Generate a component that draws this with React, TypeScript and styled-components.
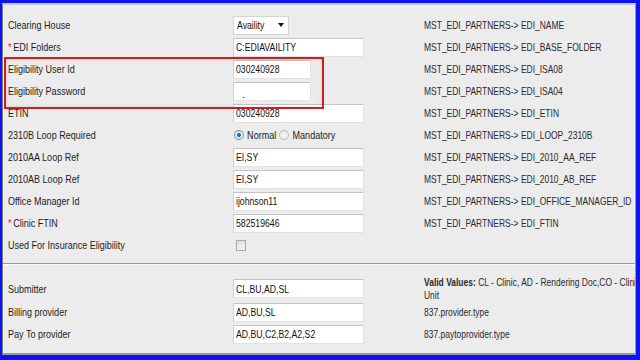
import React from 'react'
import styled, { createGlobalStyle } from 'styled-components'

const GlobalStyle = createGlobalStyle`
	html, body {
		margin: 0;
		padding: 0;
		background: #0a14f5;
	}
	* {
		box-sizing: border-box;
	}
`

const font = `"Liberation Sans", Arial, sans-serif`

const Frame = styled.div`
	width: 640px;
	height: 360px;
	display: flex;
	flex-direction: column;
	background: #0a14f5;
	padding: 3px 4px 5px 2px;
	font-family: ${font};
	font-size: 11px;
	color: #1c1c1c;
`
const Panel = styled.div`
	position: relative;
	flex: 1;
	display: flex;
	flex-direction: column;
	background: #ececec;
	border-top: 2px solid #c8c8c8;
	border-left: 1px solid #7a7a7a;
	border-right: 1px solid #9a9a9a;
	border-bottom: 2px solid #9a9a9a;
	padding-top: 9px;
	overflow: hidden;
`
// the screenshot is squeezed sideways, so the type is narrowed to match
const Text = styled.span<{ $block?: boolean; $scale?: number }>`
	display: ${p => (p.$block ? 'block' : 'inline-block')};
	transform: scaleX(${p => p.$scale ?? 0.82});
	transform-origin: left center;
	white-space: nowrap;
`
const Section = styled.div<{ $top?: number }>`
	display: flex;
	flex-direction: column;
	padding-top: ${p => p.$top ?? 0}px;
`
const Row = styled.div<{ $h?: number }>`
	display: grid;
	grid-template-columns: 229px 191px 1fr;
	align-items: center;
	height: ${p => p.$h ?? 22}px;
`
const Label = styled.div`
	padding-left: 5px;
	white-space: nowrap;
`
const Star = styled.span`
	color: #e0252a;
	margin-right: 2px;
`
const Field = styled.div`
	display: flex;
	align-items: center;
`
const Input = styled.div<{ $w?: number }>`
	width: ${p => p.$w ?? 131}px;
	height: 19px;
	margin-left: 1px;
	padding: 0 2px;
	display: flex;
	align-items: center;
	background: #fff;
	border: 1px solid #e2e2e2;
	border-top-color: #c4c4c4;
	border-left-color: #d0d0d0;
	color: #111;
`
const Select = styled.div`
	width: 56px;
	height: 19px;
	margin-left: 1px;
	display: flex;
	align-items: center;
	justify-content: space-between;
	padding: 0 4px 0 3px;
	background: #fff;
	border: 1px solid #d4d4d4;
	color: #111;
`
const Caret = styled.span`
	width: 0;
	height: 0;
	border-left: 3px solid transparent;
	border-right: 3px solid transparent;
	border-top: 4px solid #111;
`
const Choices = styled.span`
	display: inline-flex;
	align-items: center;
	gap: 4px;
	margin-left: 2px;
	transform: scaleX(0.82);
	transform-origin: left center;
	white-space: nowrap;
`
const Radio = styled.span<{ $on?: boolean }>`
	width: 12px;
	height: 10px;
	border-radius: 50%;
	border: 1px solid ${p => (p.$on ? '#7d8a99' : '#b5bcc4')};
	background: ${p =>
		p.$on
			? 'radial-gradient(ellipse, #2d6bc4 0 2px, #dfe6ee 2.8px)'
			: 'radial-gradient(ellipse, #f4f4f4 0 2px, #dcdfe3 6px)'};
`
const Check = styled.span`
	width: 10px;
	height: 11px;
	margin-left: 4px;
	border: 1px solid #a9a9a9;
	background: linear-gradient(#e0e0e0, #f3f3f3);
`
const Desc = styled.div`
	color: #2a2a2a;
	overflow: hidden;
	padding-left: 1px;
`
const DescBlock = styled.div`
	color: #2a2a2a;
	line-height: 13px;
	overflow: hidden;
	padding-left: 1px;
	& b {
		font-weight: bold;
	}
`
const Divider = styled.div`
	margin-top: 7px;
	height: 2px;
	border-top: 1px solid #9c9c9c;
	border-bottom: 1px solid #fafafa;
`
const Highlight = styled.div`
	position: relative;
	&::after {
		content: '';
		position: absolute;
		left: 1px;
		top: -1px;
		width: 316px;
		height: 48px;
		border: 2px solid #cf1d1d;
		box-shadow: inset 0 0 4px rgba(0, 0, 0, 0.12);
		pointer-events: none;
	}
`
const Dot = styled.span`
	display: inline-block;
	margin: 6px 0 0 6px;
`

const P = 'MST_EDI_PARTNERS-> '
const DESC_SCALE = 0.77
const VALUE_SCALE = 0.79

const TextRow: React.FC<{
	label: React.ReactNode
	value?: string
	width?: number
	desc?: string
}> = ({ label, value, width, desc }) => (
	<Row>
		<Label>
			<Text>{label}</Text>
		</Label>
		<Field>
			<Input $w={width}>
				<Text $scale={VALUE_SCALE}>{value}</Text>
			</Input>
		</Field>
		<Desc>
			<Text $scale={DESC_SCALE}>{desc}</Text>
		</Desc>
	</Row>
)

const App: React.FC = () => {
	return (
		<>
			<GlobalStyle />
			<Frame>
				<Panel>
					<Section>
						<Row>
							<Label>
								<Text>Clearing House</Text>
							</Label>
							<Field>
								<Select>
									<Text $scale={VALUE_SCALE}>Availity</Text> <Caret />
								</Select>
							</Field>
							<Desc>
								<Text $scale={DESC_SCALE}>{P}EDI_NAME</Text>
							</Desc>
						</Row>
						<TextRow
							label={
								<>
									<Star>*</Star>EDI Folders
								</>
							}
							value="C:EDIAVAILITY"
							desc={P + 'EDI_BASE_FOLDER'}
						/>
						<Highlight>
							<TextRow label="Eligibility User Id" value="030240928" width={78} desc={P + 'EDI_ISA08'} />
							<Row>
								<Label>
									<Text>Eligibility Password</Text>
								</Label>
								<Field>
									<Input $w={78}>
										<Dot>.</Dot>
									</Input>
								</Field>
								<Desc>
									<Text $scale={DESC_SCALE}>{P}EDI_ISA04</Text>
								</Desc>
							</Row>
						</Highlight>
						<TextRow label="ETIN" value="030240928" desc={P + 'EDI_ETIN'} />
						<Row>
							<Label>
								<Text>2310B Loop Required</Text>
							</Label>
							<Field>
								<Choices>
									<Radio $on /> Normal <Radio /> Mandatory
								</Choices>
							</Field>
							<Desc>
								<Text $scale={DESC_SCALE}>{P}EDI_LOOP_2310B</Text>
							</Desc>
						</Row>
						<TextRow label="2010AA Loop Ref" value="EI,SY" desc={P + 'EDI_2010_AA_REF'} />
						<TextRow label="2010AB Loop Ref" value="EI,SY" desc={P + 'EDI_2010_AB_REF'} />
						<TextRow label="Office Manager Id" value="ijohnson11" desc={P + 'EDI_OFFICE_MANAGER_ID'} />
						<TextRow
							label={
								<>
									<Star>*</Star>Clinic FTIN
								</>
							}
							value="582519646"
							desc={P + 'EDI_FTIN'}
						/>
						<Row>
							<Label>
								<Text>Used For Insurance Eligibility</Text>
							</Label>
							<Field>
								<Check />
							</Field>
							<Desc />
						</Row>
					</Section>
					<Divider />
					<Section $top={11}>
						<Row $h={25}>
							<Label>
								<Text>Submitter</Text>
							</Label>
							<Field>
								<Input>
									<Text $scale={VALUE_SCALE}>CL,BU,AD,SL</Text>
								</Input>
							</Field>
							<DescBlock>
								<Text $block $scale={DESC_SCALE}>
									<b>Valid Values:</b> CL - Clinic, AD - Rendering Doc,CO - Clinic
								</Text>
								<Text $block $scale={DESC_SCALE}>
									Unit
								</Text>
							</DescBlock>
						</Row>
						<TextRow label="Billing provider" value="AD,BU,SL" desc="837.provider.type" />
						<TextRow label="Pay To provider" value="AD,BU,C2,B2,A2,S2" desc="837.paytoprovider.type" />
					</Section>
				</Panel>
			</Frame>
		</>
	)
}

export default App
